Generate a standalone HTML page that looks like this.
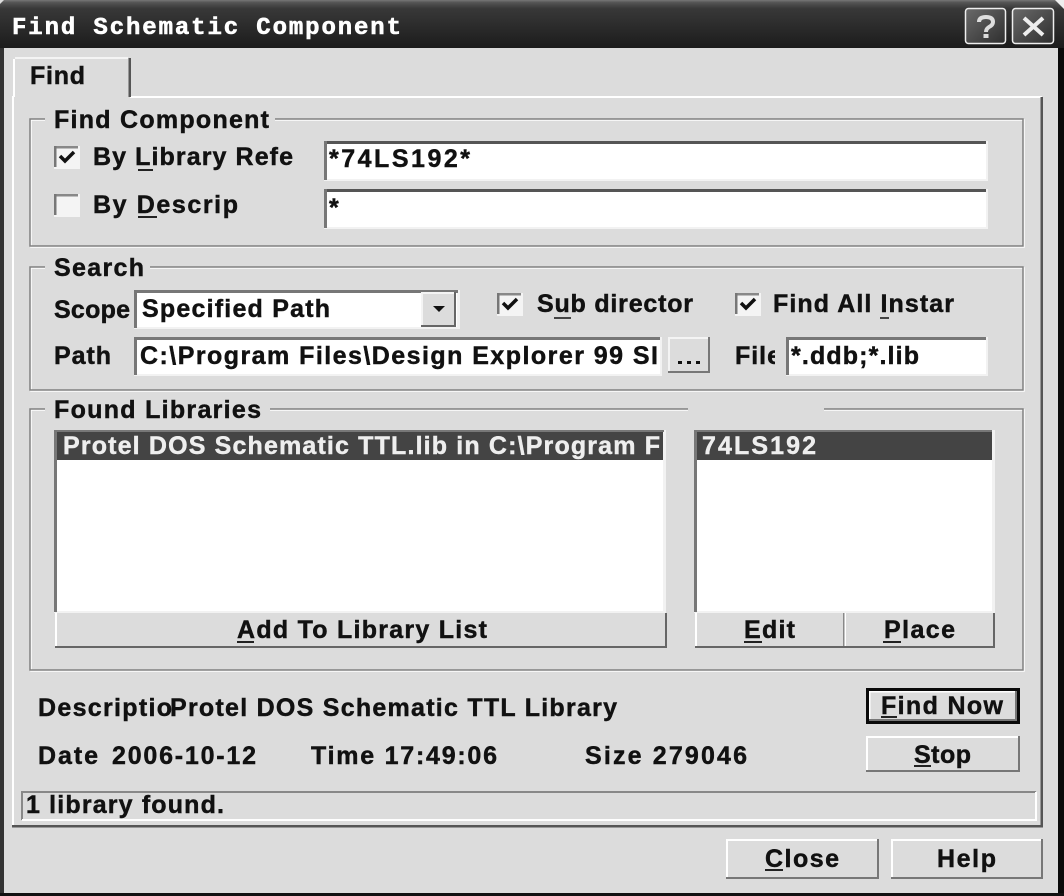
<!DOCTYPE html>
<html><head><meta charset="utf-8"><style>
html,body{margin:0;padding:0;background:#000;width:1064px;height:896px;overflow:hidden}
svg{display:block}
text{font-family:"Liberation Sans",sans-serif;font-weight:bold;font-size:25px;fill:#111;stroke:#111;stroke-width:.45px}
</style></head><body>
<svg xmlns="http://www.w3.org/2000/svg" width="1064" height="896" viewBox="0 0 1064 896">
<defs>
<linearGradient id="tb" x1="0" y1="0" x2="0" y2="1"><stop offset="0" stop-color="#777"/><stop offset=".05" stop-color="#555"/><stop offset=".18" stop-color="#383838"/><stop offset="1" stop-color="#1c1c1c"/></linearGradient>
<linearGradient id="tb2" x1="0" y1="0" x2="1" y2="1"><stop offset="0" stop-color="#6a6a6a"/><stop offset="1" stop-color="#2e2e2e"/></linearGradient>
<clipPath id="c1"><rect x="90" y="140" width="203" height="40"/></clipPath>
<clipPath id="c2"><rect x="535" y="290" width="159" height="34"/></clipPath>
<clipPath id="c3"><rect x="770" y="290" width="185" height="34"/></clipPath>
<clipPath id="c4"><rect x="138" y="340" width="522" height="34"/></clipPath>
<clipPath id="c5"><rect x="733" y="340" width="42" height="34"/></clipPath>
<clipPath id="c6"><rect x="60" y="432" width="603" height="28"/></clipPath>
</defs>
<!-- window -->
<rect width="1064" height="896" fill="#111"/>
<rect x="0" y="0" width="1064" height="48" fill="url(#tb)"/>
<path d="M1055 0 H1064 V9 Z" fill="#eee"/>
<path d="M0 0 H4 L0 4 Z" fill="#ddd"/>
<rect x="0" y="48" width="4" height="845" fill="#333"/>
<rect x="4" y="48" width="1054" height="845" fill="#dcdcdc"/>
<rect x="1058" y="48" width="6" height="848" fill="#0a0a0a"/>
<rect x="0" y="893" width="1064" height="3" fill="#111"/>
<text x="12" y="34" textLength="389" style="font-family:'Liberation Mono',monospace;font-size:24px;fill:#fff;stroke:#fff;stroke-width:.6px">Find Schematic Component</text>
<!-- caption buttons -->
<rect x="965.500" y="8.500" width="40" height="35" rx="3" fill="url(#tb2)" stroke="#eee" stroke-width="1.500"/>
<rect x="1012.500" y="8.500" width="41" height="35" rx="3" fill="url(#tb2)" stroke="#eee" stroke-width="1.500"/>
<path d="M979 22 Q979 17 986 17 Q993 17 993 22 Q993 25 989 27 Q986 29 986 32" fill="none" stroke="#ddd" stroke-width="4"/>
<rect x="983.500" y="34" width="5" height="4" fill="#ddd"/>
<path d="M1024 18 L1043 35 M1043 18 L1024 35" stroke="#eee" stroke-width="4" fill="none"/>
<!-- tab page -->
<rect x="12" y="96" width="1030" height="2" fill="#fff"/>
<rect x="12" y="96" width="2" height="731" fill="#fff"/>
<rect x="1040.500" y="97" width="2.500" height="729" fill="#555"/>
<rect x="12" y="825" width="1031" height="2.500" fill="#555"/>
<rect x="14" y="57" width="116" height="41" fill="#dcdcdc"/>
<rect x="15" y="57" width="113" height="2" fill="#f4f4f4"/>
<rect x="13" y="59" width="2" height="38" fill="#fff"/>
<rect x="128.500" y="58" width="2.500" height="39" fill="#555"/>
<text x="30" y="84" textLength="55">Find</text>

<!-- Groups -->
<g fill="none">
<rect x="31" y="120" width="993" height="127" stroke="#fff" stroke-width="1.500"/>
<rect x="30" y="119" width="993" height="127" stroke="#808080" stroke-width="1.500"/>
<rect x="31" y="268" width="993" height="123" stroke="#fff" stroke-width="1.500"/>
<rect x="30" y="267" width="993" height="123" stroke="#808080" stroke-width="1.500"/>
<rect x="31" y="410" width="993" height="261" stroke="#fff" stroke-width="1.500"/>
<rect x="30" y="409" width="993" height="261" stroke="#808080" stroke-width="1.500"/>
</g>
<rect x="45" y="112" width="230" height="14" fill="#dcdcdc"/>
<rect x="45" y="260" width="105" height="14" fill="#dcdcdc"/>
<rect x="45" y="402" width="225" height="14" fill="#dcdcdc"/>
<rect x="688" y="402" width="136" height="14" fill="#dcdcdc"/>
<text x="54" y="128" textLength="215">Find Component</text>
<text x="54" y="276" textLength="90">Search</text>
<text x="54" y="418" textLength="207">Found Libraries</text>

<!-- group 1 -->
<g id="edits">
<rect x="324" y="141" width="664" height="40" fill="#f2f2f2"/><rect x="327" y="144" width="659" height="35" fill="#fff"/><rect x="324" y="141" width="662" height="3" fill="#555"/><rect x="324" y="141" width="3" height="39" fill="#777"/>
<rect x="324" y="189" width="664" height="40" fill="#f2f2f2"/><rect x="327" y="192" width="659" height="35" fill="#fff"/><rect x="324" y="189" width="662" height="3" fill="#555"/><rect x="324" y="189" width="3" height="39" fill="#777"/>
<rect x="134" y="337" width="528" height="39" fill="#f2f2f2"/><rect x="137" y="340" width="523" height="34" fill="#fff"/><rect x="134" y="337" width="526" height="3" fill="#777"/><rect x="134" y="337" width="3" height="38" fill="#777"/>
<rect x="786" y="337" width="202" height="39" fill="#f2f2f2"/><rect x="789" y="340" width="197" height="34" fill="#fff"/><rect x="786" y="337" width="200" height="3" fill="#777"/><rect x="786" y="337" width="3" height="38" fill="#777"/>
</g>
<text x="329" y="167" textLength="141">*74LS192*</text>
<text x="329" y="216" textLength="14">*</text>

<!-- checkboxes -->
<g>
<rect x="54" y="146" width="26" height="23" fill="#f4f4f4"/><rect x="54" y="146" width="24" height="2.500" fill="#888"/><rect x="54" y="146" width="2.500" height="21" fill="#777"/><rect x="57" y="149" width="20" height="18" fill="#f4f4f4"/>
<path d="M60 156 L65 161 L74 152" fill="none" stroke="#111" stroke-width="3.500"/>
<rect x="54" y="194" width="26" height="23" fill="#f4f4f4"/><rect x="54" y="194" width="24" height="2.500" fill="#888"/><rect x="54" y="194" width="2.500" height="21" fill="#777"/><rect x="57" y="197" width="20" height="18" fill="#f4f4f4"/>
<rect x="497" y="293" width="26" height="23" fill="#f4f4f4"/><rect x="497" y="293" width="24" height="2.500" fill="#888"/><rect x="497" y="293" width="2.500" height="21" fill="#777"/><rect x="500" y="296" width="20" height="18" fill="#f4f4f4"/>
<path d="M503 303 L508 308 L517 299" fill="none" stroke="#111" stroke-width="3.500"/>
<rect x="735" y="293" width="26" height="23" fill="#f4f4f4"/><rect x="735" y="293" width="24" height="2.500" fill="#888"/><rect x="735" y="293" width="2.500" height="21" fill="#777"/><rect x="738" y="296" width="20" height="18" fill="#f4f4f4"/>
<path d="M741 303 L746 308 L755 299" fill="none" stroke="#111" stroke-width="3.500"/>
</g>
<g clip-path="url(#c1)"><text x="93" y="165" textLength="200">By Library Refe</text></g>
<rect x="138" y="169" width="15" height="2" fill="#222"/>
<text x="93" y="213" textLength="145">By Descrip</text>
<rect x="138" y="216" width="19" height="2" fill="#222"/>

<!-- group 2 -->
<text x="54" y="318" textLength="76">Scope</text>
<rect x="134" y="290" width="326" height="39" fill="#f2f2f2"/>
<rect x="137" y="293" width="320" height="34" fill="#fff"/>
<rect x="134" y="290" width="324" height="3" fill="#777"/>
<rect x="134" y="290" width="3" height="38" fill="#777"/>
<rect x="421" y="292" width="35" height="35" fill="#666"/>
<rect x="421" y="292" width="33" height="33" fill="#dcdcdc"/>
<rect x="421" y="292" width="33" height="2" fill="#f4f4f4"/>
<rect x="421" y="292" width="2" height="33" fill="#f4f4f4"/>
<path d="M433 306 H445 L439 312 Z" fill="#111"/>
<text x="142" y="317" textLength="188">Specified Path</text>
<g clip-path="url(#c2)"><text x="537" y="312" textLength="156">Sub director</text></g>
<rect x="554" y="317" width="17" height="2" fill="#444"/>
<g clip-path="url(#c3)"><text x="773" y="312" textLength="181">Find All Instar</text></g>
<rect x="880" y="317" width="9" height="2" fill="#444"/>
<text x="54" y="364" textLength="57">Path</text>
<g clip-path="url(#c4)"><text x="140" y="364" textLength="518">C:\Program Files\Design Explorer 99 SI</text></g>
<rect x="668" y="337" width="42" height="36" fill="#777"/>
<rect x="668" y="337" width="40" height="34" fill="#dcdcdc"/>
<rect x="668" y="337" width="40" height="2" fill="#f4f4f4"/>
<rect x="668" y="337" width="2" height="34" fill="#f4f4f4"/>
<rect x="678" y="361" width="4" height="3" fill="#111"/><rect x="687" y="361" width="4" height="3" fill="#111"/><rect x="696" y="361" width="4" height="3" fill="#111"/>
<g clip-path="url(#c5)"><text x="735" y="364" textLength="46">File</text></g>
<text x="791" y="364" textLength="128">*.ddb;*.lib</text>

<!-- lists -->
<rect x="54" y="430" width="612" height="183" fill="#f2f2f2"/>
<rect x="57" y="431" width="606" height="180" fill="#fff"/>
<rect x="54" y="430" width="3" height="182" fill="#777"/>
<rect x="57" y="432" width="606" height="28" fill="#444"/>
<rect x="54" y="430" width="610" height="2" fill="#777"/>
<g clip-path="url(#c6)"><text x="63" y="454" textLength="597" style="fill:#eee;stroke:#eee">Protel DOS Schematic TTL.lib in C:\Program F</text></g>
<rect x="694" y="430" width="301" height="183" fill="#f2f2f2"/>
<rect x="697" y="431" width="295" height="180" fill="#fff"/>
<rect x="694" y="430" width="3" height="182" fill="#777"/>
<rect x="697" y="432" width="295" height="28" fill="#444"/>
<rect x="694" y="430" width="298" height="2" fill="#777"/>
<text x="702" y="454" textLength="114" style="fill:#eee;stroke:#eee">74LS192</text>

<!-- list buttons -->
<rect x="55" y="613" width="612" height="35" fill="#666"/><rect x="55" y="613" width="610" height="33" fill="#dcdcdc"/><rect x="55" y="613" width="2" height="33" fill="#fff"/>
<text x="237" y="638" textLength="250">Add To Library List</text>
<rect x="237" y="641" width="17" height="2" fill="#222"/>
<rect x="695" y="613" width="300" height="35" fill="#666"/><rect x="695" y="613" width="298" height="33" fill="#dcdcdc"/><rect x="695" y="613" width="2" height="33" fill="#fff"/>
<rect x="843" y="613" width="1.500" height="33" fill="#888"/><rect x="844.500" y="613" width="1.500" height="33" fill="#fff"/>
<text x="744" y="638" textLength="51">Edit</text>
<rect x="744" y="641" width="18" height="2" fill="#222"/>
<text x="884" y="638" textLength="71">Place</text>
<rect x="883" y="641" width="18" height="2" fill="#222"/>

<!-- info -->
<text x="38" y="716" textLength="134">Descriptio</text>
<text x="170" y="716" textLength="447">Protel DOS Schematic TTL Library</text>
<text x="38" y="764" textLength="60">Date</text>
<text x="112" y="764" textLength="144">2006-10-12</text>
<text x="311" y="764" textLength="186">Time 17:49:06</text>
<text x="585" y="764" textLength="162">Size 279046</text>

<!-- find now / stop -->
<rect x="866" y="688" width="154" height="36" fill="#0a0a0a"/>
<rect x="869" y="691" width="148" height="30" fill="#777"/>
<rect x="869" y="691" width="146" height="28" fill="#dcdcdc"/>
<rect x="869" y="691" width="146" height="1.500" fill="#fff"/>
<rect x="869" y="691" width="1.500" height="28" fill="#fff"/>
<text x="881" y="714" textLength="122">Find Now</text>
<rect x="881" y="716" width="16" height="2" fill="#222"/>
<rect x="866" y="736" width="154" height="36" fill="#777"/>
<rect x="866" y="736" width="152" height="34" fill="#dcdcdc"/>
<rect x="866" y="736" width="152" height="2" fill="#fff"/>
<rect x="866" y="736" width="2" height="34" fill="#fff"/>
<text x="914" y="763" textLength="57">Stop</text>
<rect x="914" y="765" width="17" height="2" fill="#222"/>

<!-- status -->
<rect x="21" y="791" width="1015" height="2" fill="#888"/>
<rect x="21" y="791" width="2" height="29" fill="#888"/>
<rect x="22" y="819" width="1014" height="2" fill="#fff"/>
<rect x="1035" y="792" width="2" height="29" fill="#fff"/>
<text x="26" y="813" textLength="198">1 library found.</text>

<!-- close / help -->
<rect x="726" y="839" width="153" height="40" fill="#777"/>
<rect x="726" y="839" width="151" height="38" fill="#dcdcdc"/>
<rect x="726" y="839" width="151" height="2" fill="#fff"/>
<rect x="726" y="839" width="2" height="38" fill="#fff"/>
<text x="765" y="867" textLength="74">Close</text>
<rect x="765" y="869" width="18" height="2" fill="#222"/>
<rect x="891" y="839" width="152" height="40" fill="#777"/>
<rect x="891" y="839" width="150" height="38" fill="#dcdcdc"/>
<rect x="891" y="839" width="150" height="2" fill="#fff"/>
<rect x="891" y="839" width="2" height="38" fill="#fff"/>
<text x="937" y="867" textLength="59">Help</text>
</svg>
</body></html>
